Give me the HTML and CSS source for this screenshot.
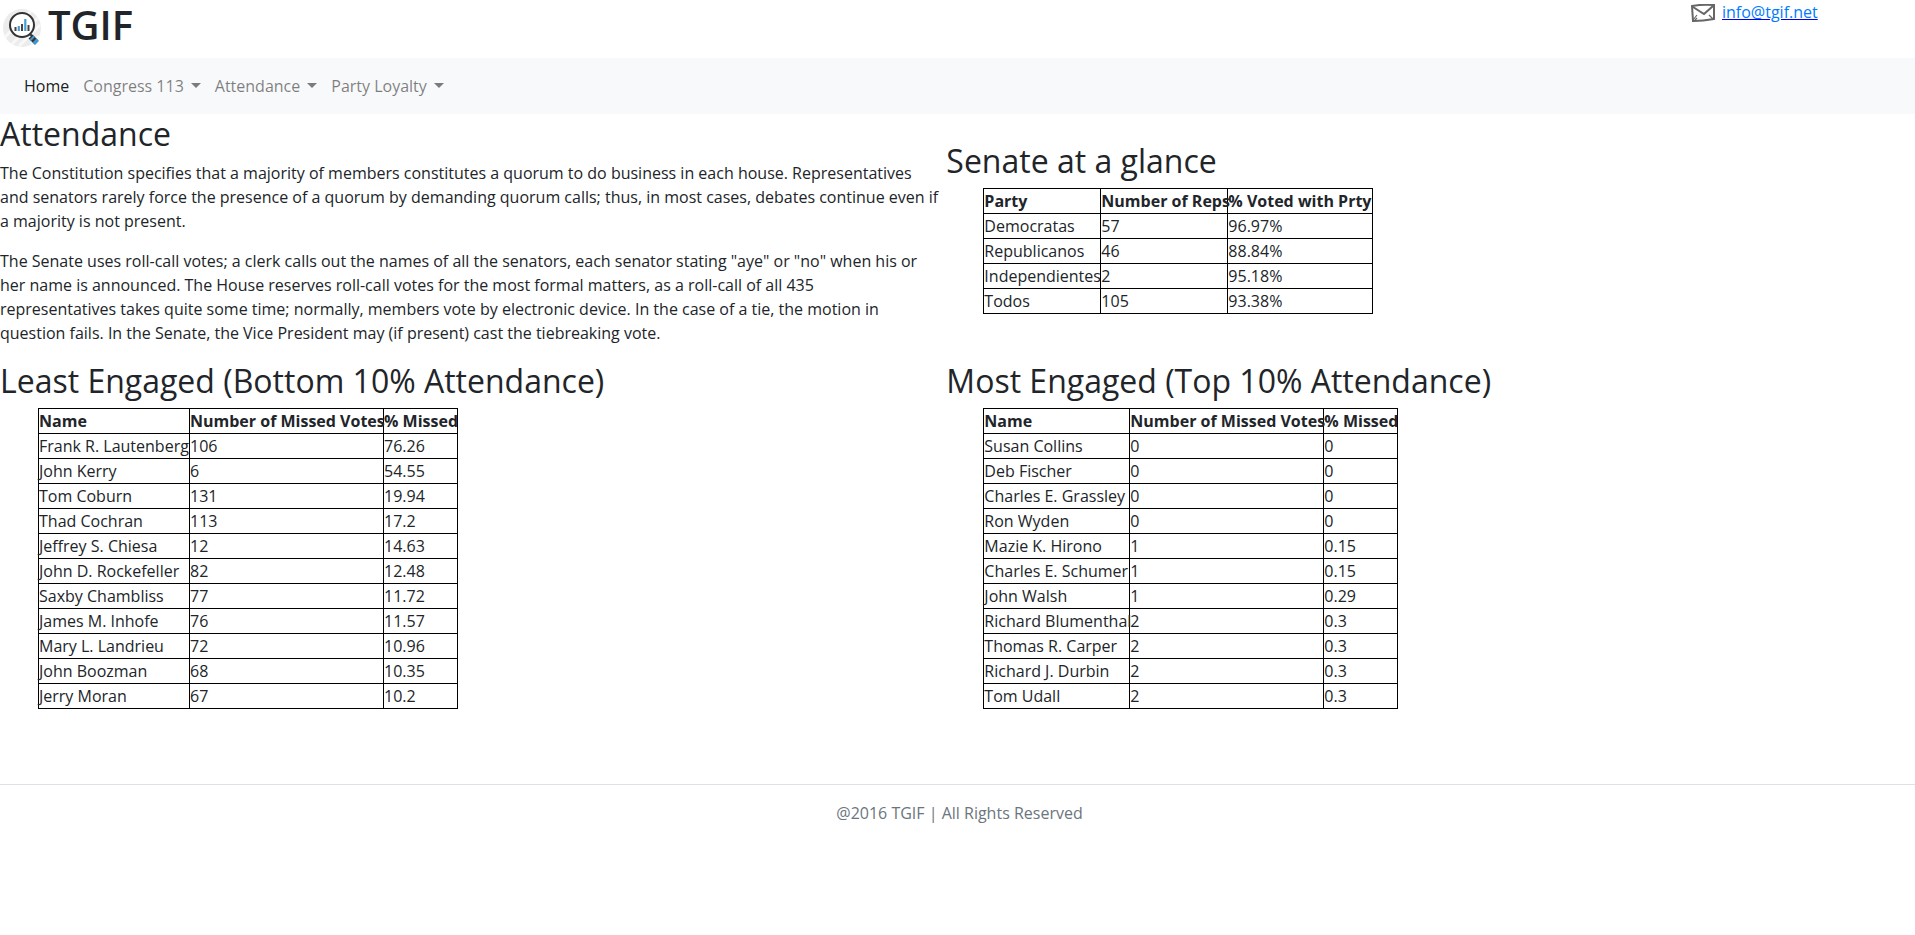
FILE: index.html
```html
<!DOCTYPE html>
<html lang="en">
<head>
<meta charset="utf-8">
<title>TGIF</title>
<link rel="stylesheet" href="styles.css">
</head>
<body>
<header class="masthead">
  <div class="brand">
    <svg class="logo" viewBox="0 0 38 38" aria-hidden="true">
      <circle cx="19" cy="19" r="19" fill="#ececec"/>
      <path d="M2 28L28 2M9 35L35 9M16 37L37 16M28 35L36 27" stroke="#f8f8f8" stroke-width="3"/>
      <path d="M26 24l4 4" stroke="#333" stroke-width="2"/>
      <circle cx="19" cy="16" r="12" fill="#fff" stroke="#333" stroke-width="2"/>
      <path d="M12.500 22v-4M19 22v-7M25.500 22v-6" stroke="#444" stroke-width="2"/>
      <path d="M15.800 22v-5M22.300 22V10" stroke="#4b9cd3" stroke-width="2.200"/>
      <path d="M27.500 27.500l6 6" stroke="#333" stroke-width="5.500"/>
      <path d="M28.500 28.500l1.500 1.500M31.500 31.500l2.500 2.500" stroke="#3f96d2" stroke-width="5.500"/>
    </svg>
    <h1 class="brand-name">TGIF</h1>
  </div>
  <div class="contact">
    <svg class="mail" viewBox="0 0 24 18" fill="none" stroke="#666" stroke-width="2" aria-hidden="true">
      <path d="M1 2Q12 0 23 1V15Q12 17 2 17Z"/>
      <path d="M2 3L13 10L22 2"/>
      <path d="M2 16l4-5M4 16l2-2M22 15l-4-4" stroke-width="1.200"/>
    </svg>
    <a class="mail-link" href="mailto:info@tgif.net">info@tgif.net</a>
  </div>
</header>
<nav class="nav">
  <a class="nav-link active" href="#">Home</a>
  <button class="nav-link toggle" type="button">Congress 113</button>
  <button class="nav-link toggle" type="button">Attendance</button>
  <button class="nav-link toggle" type="button">Party Loyalty</button>
</nav>
<main class="content">
  <section class="intro">
    <h2>Attendance</h2>
    <p>The Constitution specifies that a majority of members constitutes a quorum to do business in each house. Representatives and senators rarely force the presence of a quorum by demanding quorum calls; thus, in most cases, debates continue even if a majority is not present.</p>
    <p>The Senate uses roll-call votes; a clerk calls out the names of all the senators, each senator stating "aye" or "no" when his or her name is announced. The House reserves roll-call votes for the most formal matters, as a roll-call of all 435<br> representatives takes quite some time; normally, members vote by electronic device. In the case of a tie, the motion in<br> question fails. In the Senate, the Vice President may (if present) cast the tiebreaking vote.</p>
  </section>
  <section class="glance">
    <h2>Senate at a glance</h2>
    <table class="grid-table glance-table">
      <colgroup><col class="c-party"><col class="c-reps"><col class="c-voted"></colgroup>
      <tr><th>Party</th><th>Number of Reps</th><th>% Voted with Prty</th></tr>
      <tr><td>Democratas</td><td>57</td><td>96.97%</td></tr>
      <tr><td>Republicanos</td><td>46</td><td>88.84%</td></tr>
      <tr><td>Independientes</td><td>2</td><td>95.18%</td></tr>
      <tr><td>Todos</td><td>105</td><td>93.38%</td></tr>
    </table>
  </section>
  <section class="ranking">
    <h2>Least Engaged (Bottom 10% Attendance)</h2>
    <table class="grid-table least-table">
      <colgroup><col class="c-least"><col class="c-votes"><col class="c-missed"></colgroup>
      <tr><th>Name</th><th>Number of Missed Votes</th><th>% Missed</th></tr>
      <tr><td>Frank R. Lautenberg</td><td>106</td><td>76.26</td></tr>
      <tr><td>John Kerry</td><td>6</td><td>54.55</td></tr>
      <tr><td>Tom Coburn</td><td>131</td><td>19.94</td></tr>
      <tr><td>Thad Cochran</td><td>113</td><td>17.2</td></tr>
      <tr><td>Jeffrey S. Chiesa</td><td>12</td><td>14.63</td></tr>
      <tr><td>John D. Rockefeller</td><td>82</td><td>12.48</td></tr>
      <tr><td>Saxby Chambliss</td><td>77</td><td>11.72</td></tr>
      <tr><td>James M. Inhofe</td><td>76</td><td>11.57</td></tr>
      <tr><td>Mary L. Landrieu</td><td>72</td><td>10.96</td></tr>
      <tr><td>John Boozman</td><td>68</td><td>10.35</td></tr>
      <tr><td>Jerry Moran</td><td>67</td><td>10.2</td></tr>
    </table>
  </section>
  <section class="ranking">
    <h2>Most Engaged (Top 10% Attendance)</h2>
    <table class="grid-table most-table">
      <colgroup><col class="c-most"><col class="c-votes"><col class="c-missed"></colgroup>
      <tr><th>Name</th><th>Number of Missed Votes</th><th>% Missed</th></tr>
      <tr><td>Susan Collins</td><td>0</td><td>0</td></tr>
      <tr><td>Deb Fischer</td><td>0</td><td>0</td></tr>
      <tr><td>Charles E. Grassley</td><td>0</td><td>0</td></tr>
      <tr><td>Ron Wyden</td><td>0</td><td>0</td></tr>
      <tr><td>Mazie K. Hirono</td><td>1</td><td>0.15</td></tr>
      <tr><td>Charles E. Schumer</td><td>1</td><td>0.15</td></tr>
      <tr><td>John Walsh</td><td>1</td><td>0.29</td></tr>
      <tr><td>Richard Blumenthal</td><td>2</td><td>0.3</td></tr>
      <tr><td>Thomas R. Carper</td><td>2</td><td>0.3</td></tr>
      <tr><td>Richard J. Durbin</td><td>2</td><td>0.3</td></tr>
      <tr><td>Tom Udall</td><td>2</td><td>0.3</td></tr>
    </table>
  </section>
</main>
<footer class="footer">@2016 TGIF | All Rights Reserved</footer>
</body>
</html>
```
FILE: styles.css
```css
*, *::before, *::after { box-sizing: border-box; }
body {
  margin: 0;
  background: #fff;
  color: #212529;
  font: 16px/24px "Comic Sans MS", "Open Sans", "Noto Sans", sans-serif;
}
h1, h2 { margin: 0 0 8px; font-weight: 400; }
h2 { font-size: 32px; line-height: 38px; }
p { margin: 0 0 16px; }
.masthead { display: flex; justify-content: space-between; min-height: 58px; padding: 0 91px 0 3px; }
.brand { display: flex; gap: 7px; }
.brand-name { margin: 0; font-size: 40px; line-height: 50px; font-weight: 600; }
.logo { width: 38px; height: 38px; margin-top: 9px; }
.contact { display: flex; align-items: flex-start; gap: 7px; }
.mail { width: 24px; height: 18px; margin-top: 4px; }
.mail-link { min-width: 102px; color: #007bff; text-decoration: underline #0000ee; }
.nav { display: flex; align-items: center; padding: 8px 17px; background: #f8f9fa; }
.nav-link {
  padding: 8px 7px;
  border: 0;
  background: none;
  color: rgba(0, 0, 0, 0.5);
  font: inherit;
  text-decoration: none;
}
.nav-link.active { color: rgba(0, 0, 0, 0.9); }
.toggle::after {
  content: "";
  display: inline-block;
  margin-left: 7px;
  vertical-align: 4px;
  border: 5px solid transparent;
  border-top-color: currentColor;
  border-bottom: 0;
}
.content { display: grid; grid-template-columns: 49% 1fr; column-gap: 8px; padding-top: 1px; }
.intro { padding-bottom: 1px; }
.glance { padding-top: 27px; }
.grid-table { margin-left: 37px; border-collapse: collapse; table-layout: fixed; }
.least-table { width: 420px; margin-left: 38px; }
.most-table { width: 415px; }
.glance-table { width: 390px; }
.c-least { width: 151px; }
.c-most { width: 146px; }
.c-votes { width: 194px; }
.c-party { width: 117px; }
.c-reps { width: 127px; }
.grid-table th, .grid-table td { padding: 0; border: 1px solid #000; text-align: left; white-space: nowrap; }
.footer {
  margin-top: 75px;
  padding: 16px 0 24px 4px;
  border-top: 1px solid #dee2e6;
  color: #6c757d;
  text-align: center;
}
```
